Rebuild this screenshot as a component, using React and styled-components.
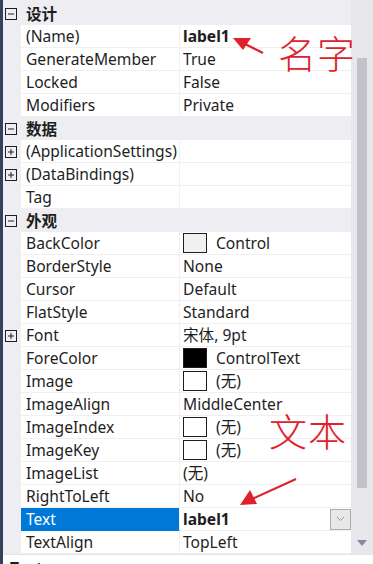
import styled, { createGlobalStyle } from "styled-components";

const GlobalStyle = createGlobalStyle`
  html, body {
    margin: 0;
    padding: 0;
    background: #eeeef2;
  }
  body {
    font-family: "Noto Sans", "Noto Sans CJK SC", sans-serif;
    font-size: 15.6px;
    color: #1e1e1e;
  }
`;

const Frame = styled.div`
  position: relative;
  width: 373px;
  height: 564px;
  display: flex;
  overflow: hidden;
  background: #eeeef2;
`;

const EdgeStrip = styled.div`
  width: 3px;
  flex: none;
  background: #33405e;
`;

const Main = styled.div`
  flex: 1;
  display: flex;
  flex-direction: column;
  min-width: 0;
`;

const Body = styled.div`
  display: flex;
  height: 554px;
  flex: none;
`;

const Grid = styled.div`
  flex: 1;
  padding-top: 2px;
`;

const Row = styled.div`
  display: grid;
  grid-template-columns: 18px 159px 171px;
  height: 23px;
`;

const Gutter = styled.div`
  display: flex;
  align-items: center;
  padding-left: 2px;
`;

const NameCell = styled.div`
  background: ${(p) => (p.$selected ? "#0078d7" : "#ffffff")};
  color: ${(p) => (p.$selected ? "#ffffff" : "#1e1e1e")};
  border-right: 1px solid #f0f0f0;
  border-bottom: 1px solid ${(p) => (p.$selected ? "#0078d7" : "#f0f0f0")};
  padding-left: 5px;
  line-height: 22px;
  white-space: nowrap;
  overflow: hidden;
`;

const ValueCell = styled.div`
  display: flex;
  align-items: center;
  gap: 9px;
  background: #ffffff;
  border-bottom: 1px solid #f0f0f0;
  padding-left: 3px;
  font-weight: ${(p) => (p.$bold ? 700 : 400)};
  line-height: 22px;
  white-space: nowrap;
  overflow: hidden;
`;

const CategoryRow = styled.div`
  display: grid;
  grid-template-columns: 18px 1fr;
  height: 23px;
  align-items: center;
`;

const CategoryTitle = styled.div`
  font-weight: 700;
  padding-left: 5px;
  line-height: 22px;
`;

const Swatch = styled.span`
  width: 22px;
  height: 18px;
  flex: none;
  border: 1px solid #1e1e1e;
  background: ${(p) => p.$color};
`;

const DropButton = styled.div`
  margin-left: auto;
  width: 19px;
  height: 19px;
  border: 1px solid #acacac;
  background: #e8e8e8;
  display: flex;
  align-items: center;
  justify-content: center;
`;

const ScrollBar = styled.div`
  width: 22px;
  flex: none;
  background: #e8e8ec;
  display: flex;
  flex-direction: column;
  align-items: center;
`;

const Thumb = styled.div`
  margin-top: 58px;
  width: 10px;
  height: 430px;
  background: #c2c3c9;
`;

const ScrollArrow = styled.div`
  margin-top: auto;
  margin-bottom: 8px;
  display: flex;
`;

const Description = styled.div`
  flex: 1;
  background: #ffffff;
  border-top: 1px solid #e4e4e8;
  padding: 4px 0 0 7px;
  font-weight: 700;
  line-height: 18px;
`;

const Annotation = styled.div`
  position: absolute;
  left: ${(p) => p.$x}px;
  top: ${(p) => p.$y}px;
  font-family: "Noto Sans CJK SC", sans-serif;
  font-size: 38px;
  font-weight: 300;
  letter-spacing: 1px;
  line-height: 1;
  color: #e0212c;
`;

const ArrowLayer = styled.svg`
  position: absolute;
  left: 0;
  top: 0;
  pointer-events: none;
`;

const ToggleIcon = ({ open }) => (
  <svg width="12" height="12" viewBox="0 0 12 12">
    <rect x="0.5" y="0.5" width="11" height="11" fill="none" stroke="#1e1e1e" />
    <line x1="3" y1="6" x2="9" y2="6" stroke="#1e1e1e" />
    {!open && <line x1="6" y1="3" x2="6" y2="9" stroke="#1e1e1e" />}
  </svg>
);

const Category = ({ title }) => (
  <CategoryRow>
    <Gutter>
      <ToggleIcon open />
    </Gutter>
    <CategoryTitle>{title}</CategoryTitle>
  </CategoryRow>
);

const Property = ({ name, value, bold, swatch, expandable, selected, dropdown }) => (
  <Row>
    <Gutter>{expandable && <ToggleIcon />}</Gutter>
    <NameCell $selected={selected}>{name}</NameCell>
    <ValueCell $bold={bold}>
      {swatch && <Swatch $color={swatch} />}
      {value}
      {dropdown && (
        <DropButton>
          <svg width="9" height="6" viewBox="0 0 9 6">
            <polyline points="1,1 4.5,4.5 8,1" fill="none" stroke="#9a9a9a" />
          </svg>
        </DropButton>
      )}
    </ValueCell>
  </Row>
);

const sections = [
  {
    title: "设计",
    items: [
      { name: "(Name)", value: "label1", bold: true },
      { name: "GenerateMember", value: "True" },
      { name: "Locked", value: "False" },
      { name: "Modifiers", value: "Private" },
    ],
  },
  {
    title: "数据",
    items: [
      { name: "(ApplicationSettings)", value: "", expandable: true },
      { name: "(DataBindings)", value: "", expandable: true },
      { name: "Tag", value: "" },
    ],
  },
  {
    title: "外观",
    items: [
      { name: "BackColor", value: "Control", swatch: "#f0f0f0" },
      { name: "BorderStyle", value: "None" },
      { name: "Cursor", value: "Default" },
      { name: "FlatStyle", value: "Standard" },
      { name: "Font", value: "宋体, 9pt", expandable: true },
      { name: "ForeColor", value: "ControlText", swatch: "#000000" },
      { name: "Image", value: "(无)", swatch: "#ffffff" },
      { name: "ImageAlign", value: "MiddleCenter" },
      { name: "ImageIndex", value: "(无)", swatch: "#ffffff" },
      { name: "ImageKey", value: "(无)", swatch: "#ffffff" },
      { name: "ImageList", value: "(无)" },
      { name: "RightToLeft", value: "No" },
      { name: "Text", value: "label1", bold: true, selected: true, dropdown: true },
      { name: "TextAlign", value: "TopLeft" },
    ],
  },
];

export default function App() {
  return (
    <>
      <GlobalStyle />
      <Frame>
        <EdgeStrip />
        <Main>
          <Body>
            <Grid>
              {sections.map((s) => (
                <div key={s.title}>
                  <Category title={s.title} />
                  {s.items.map((it) => (
                    <Property key={it.name} {...it} />
                  ))}
                </div>
              ))}
            </Grid>
            <ScrollBar>
              <Thumb />
              <ScrollArrow>
                <svg width="10" height="6" viewBox="0 0 10 6">
                  <polygon points="0,0 10,0 5,6" fill="#868999" />
                </svg>
              </ScrollArrow>
            </ScrollBar>
          </Body>
          <Description>Text</Description>
        </Main>

        <Annotation $x={278} $y={33}>名字</Annotation>
        <Annotation $x={269} $y={411}>文本</Annotation>
        <ArrowLayer width="373" height="564" viewBox="0 0 373 564">
          <line x1="263" y1="53" x2="243" y2="43" stroke="#e0212c" strokeWidth="2.2" />
          <polygon points="233,38 251,38 243,50" fill="#e0212c" />
          <line x1="296" y1="479" x2="252" y2="499" stroke="#e0212c" strokeWidth="2.2" />
          <polygon points="240,505 250,490 257,504" fill="#e0212c" />
        </ArrowLayer>
      </Frame>
    </>
  );
}
